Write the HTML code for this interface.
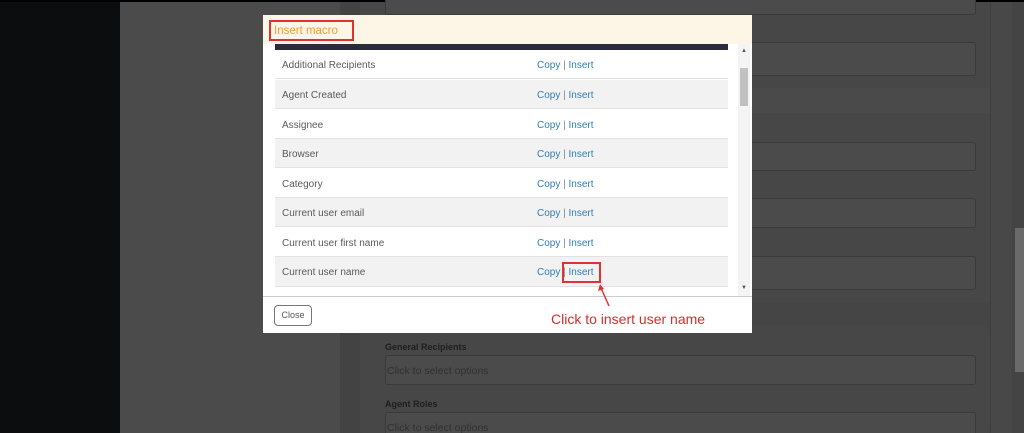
<!DOCTYPE html>
<html style="width:1024px;height:433px;overflow:hidden"><head><style>
*{margin:0;padding:0;box-sizing:border-box}
body{width:1024px;height:433px;overflow:hidden;background:#454545;font-family:"Liberation Sans",sans-serif;position:relative}
.a{position:absolute}
.inp{position:absolute;left:385px;width:591px;border:1px solid #3a3a3a;border-radius:3px;background:#4b4b4b}
.row{position:absolute;left:275px;width:453px;height:29px;font-size:10px;color:#5a5a5a;border-bottom:1px solid #e2e2e2}
.row span{position:absolute;left:7px;top:10px}
.row b{position:absolute;left:262px;top:10px;font-weight:normal;color:#2f7eb3}
.row b i{font-style:normal;color:#888}
</style></head><body>
<div class="a" style="left:0;top:0;width:120px;height:433px;background:#0c0d0e"></div>
<div class="a" style="left:120px;top:0;width:220px;height:433px;background:#4b4b4b"></div>
<div class="a" style="left:340px;top:0;width:20px;height:433px;background:#434343"></div>
<div class="a" style="left:360px;top:0;width:630px;height:88px;background:#474747"></div>
<div class="a" style="left:360px;top:88px;width:630px;height:25px;background:#4a4a4a"></div>
<div class="a" style="left:360px;top:113px;width:630px;height:190px;background:#474747"></div>
<div class="a" style="left:360px;top:327px;width:630px;height:106px;background:#474747;border-radius:4px"></div>
<div class="a" style="left:990px;top:0;width:22px;height:433px;background:#484848;border-left:1px solid #404040"></div>
<div class="a" style="left:1012px;top:0;width:12px;height:433px;background:#444"></div>
<div class="a" style="left:1015px;top:228px;width:9px;height:144px;background:#6a6a6a"></div>
<div class="a" style="left:0;top:0;width:1024px;height:2px;background:#000"></div>
<div class="inp" style="top:-2px;height:17px"></div>
<div class="inp" style="top:42px;height:34px"></div>
<div class="inp" style="top:142px;height:29px"></div>
<div class="inp" style="top:198px;height:30px"></div>
<div class="inp" style="top:256px;height:34px"></div>
<div class="a" style="left:385px;top:342px;font-size:9px;font-weight:bold;color:#1e1e1e">General Recipients</div>
<div class="inp" style="top:355px;height:30px"><span style="position:absolute;left:1px;top:9px;font-size:10.5px;color:#303030">Click to select options</span></div>
<div class="a" style="left:385px;top:399px;font-size:9px;font-weight:bold;color:#1e1e1e">Agent Roles</div>
<div class="inp" style="top:412px;height:21px;border-bottom:none;border-radius:3px 3px 0 0"><span style="position:absolute;left:1px;top:9px;font-size:10.5px;color:#303030">Click to select options</span></div>

<div class="a" style="left:263px;top:15px;width:489px;height:318px;background:#fff">
<div class="a" style="left:0;top:0;width:489px;height:29px;background:#fdf6e6"></div>
<div class="a" style="left:6px;top:5px;width:85px;height:21px;border:2px solid #d33;color:#f0a030;font-size:11.5px;padding:3px 0 0 3px">Insert macro</div>
<div class="a" style="left:12px;top:29px;width:453px;height:6px;background:#2a2b3c"></div>
<div class="a" style="left:475px;top:29px;width:12px;height:252px;background:#f4f4f4"></div>
<div class="a" style="left:477px;top:53px;width:8px;height:38px;background:#c1c1c1"></div>
<div class="a" style="left:478px;top:33px;font-size:6px;color:#555">▲</div>
<div class="a" style="left:478px;top:270px;font-size:6px;color:#555">▼</div>
<div class="a" style="left:0;top:281px;width:489px;height:1px;background:#ccc"></div>
<div class="a" style="left:11px;top:290px;width:38px;height:21px;border:1px solid #777;border-radius:4px;font-size:9px;color:#555;text-align:center;line-height:19px">Close</div>
<div class="a" style="left:288px;top:296px;font-size:14px;color:#d82d2d">Click to insert user name</div>
</div>
<div class="row" style="top:50px;background:#fff"><span>Additional Recipients</span><b>Copy <i>|</i> Insert</b></div>
<div class="row" style="top:80px;background:#f2f2f2"><span>Agent Created</span><b>Copy <i>|</i> Insert</b></div>
<div class="row" style="top:110px;background:#fff"><span>Assignee</span><b>Copy <i>|</i> Insert</b></div>
<div class="row" style="top:139px;background:#f2f2f2"><span>Browser</span><b>Copy <i>|</i> Insert</b></div>
<div class="row" style="top:169px;background:#fff"><span>Category</span><b>Copy <i>|</i> Insert</b></div>
<div class="row" style="top:198px;background:#f2f2f2"><span>Current user email</span><b>Copy <i>|</i> Insert</b></div>
<div class="row" style="top:228px;background:#fff"><span>Current user first name</span><b>Copy <i>|</i> Insert</b></div>
<div class="row" style="top:257px;background:#f2f2f2;height:30px"><span>Current user name</span><b>Copy <i>|</i> Insert</b></div>
<div class="a" style="left:562px;top:262px;width:39px;height:21px;border:2px solid #d33"></div>
<svg class="a" style="left:595px;top:282px" width="20" height="26"><line x1="14" y1="24" x2="6" y2="6" stroke="#d33" stroke-width="1.5"/><path d="M5 2 L3 9 L9 7 Z" fill="#d33"/></svg>
</body></html>
